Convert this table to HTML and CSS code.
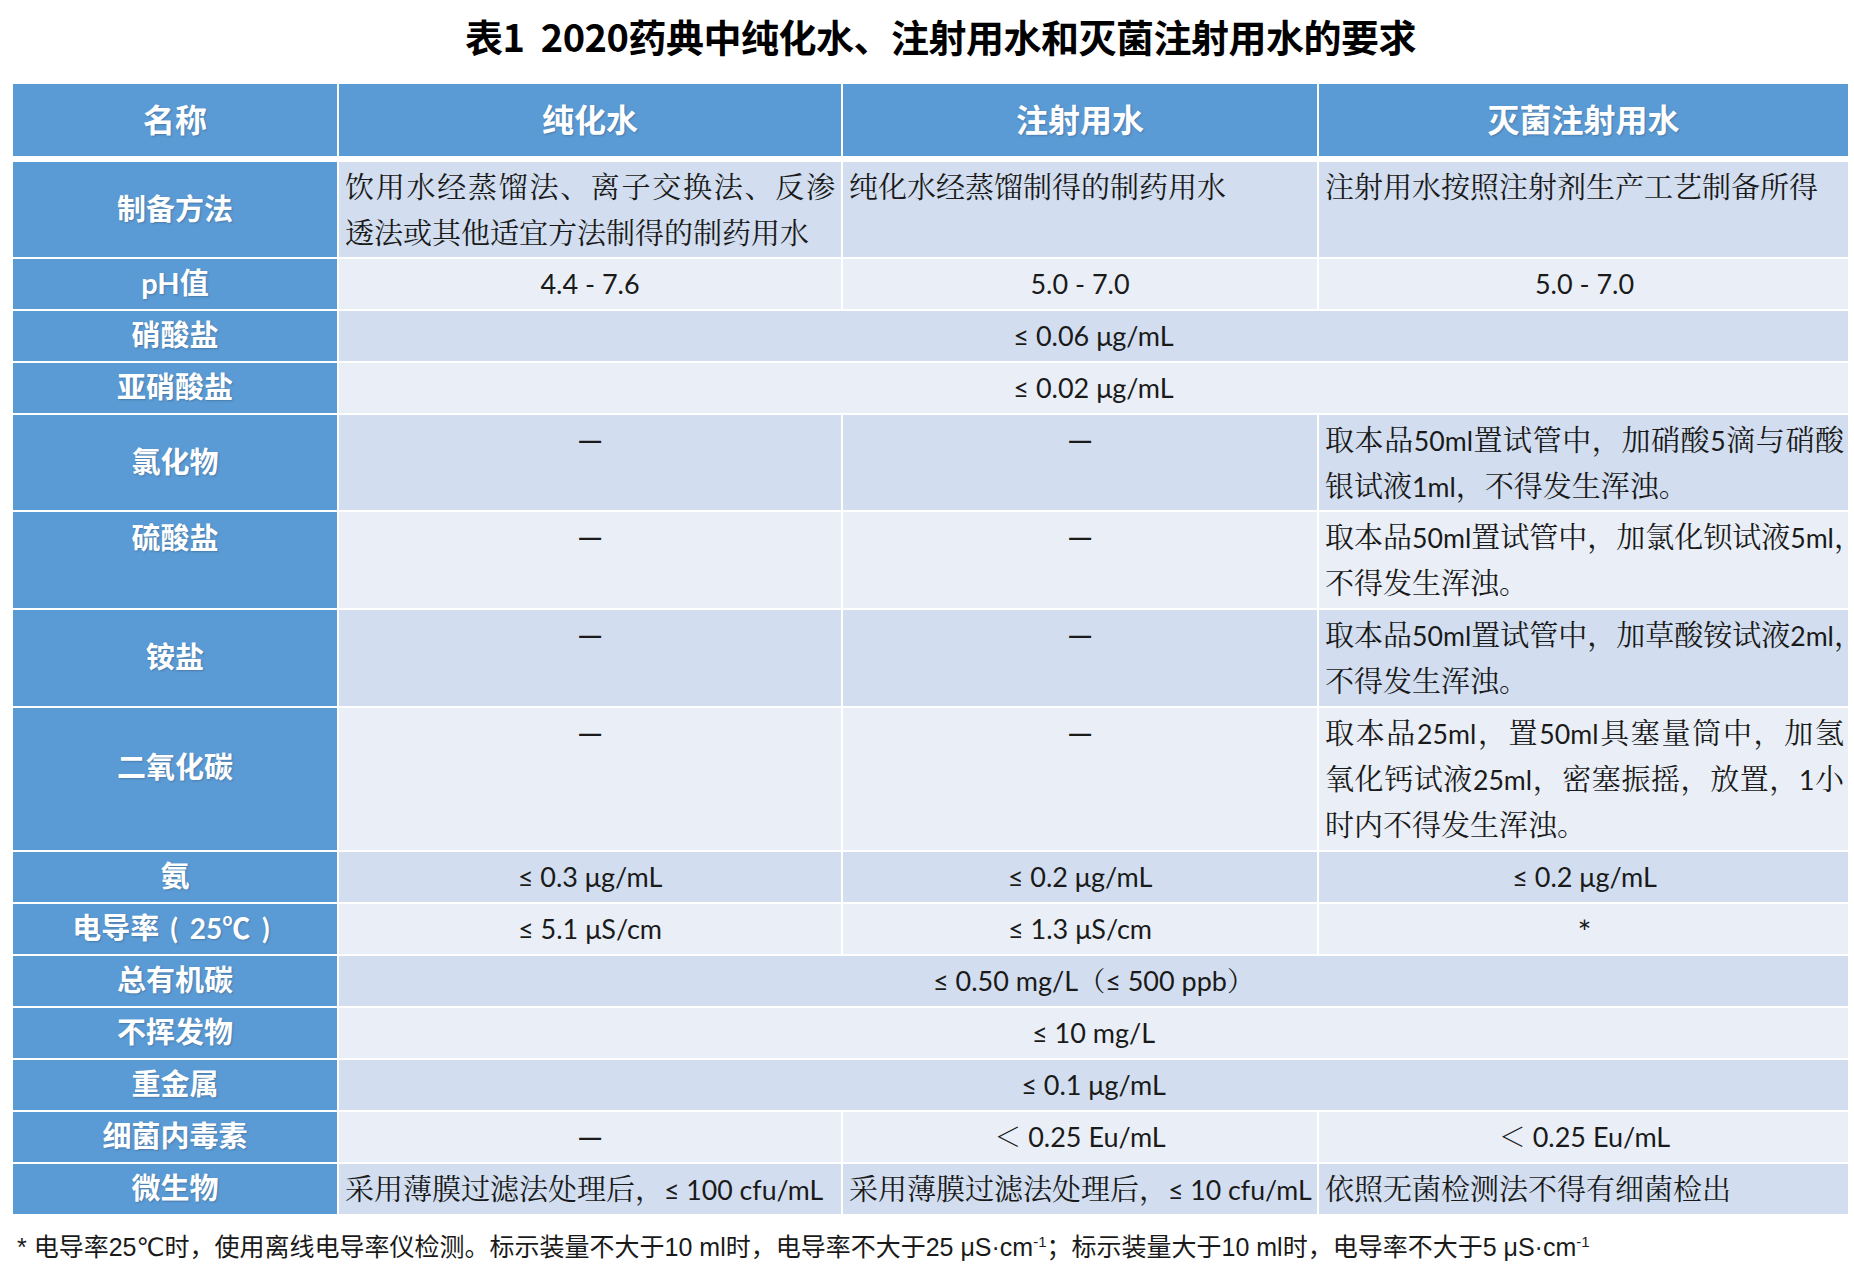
FILE: index.html
```html
<!DOCTYPE html>
<html lang="zh-CN">
<head>
<meta charset="utf-8">
<title>表1 2020药典中纯化水、注射用水和灭菌注射用水的要求</title>
<link rel="stylesheet" href="styles.css">
</head>
<body>
<main class="page">
  <h1 class="title">表1&nbsp;&nbsp;2020药典中纯化水、注射用水和灭菌注射用水的要求</h1>

  <div class="table">
    <div class="hd">名称</div>
    <div class="hd">纯化水</div>
    <div class="hd">注射用水</div>
    <div class="hd">灭菌注射用水</div>

    <div class="lab">制备方法</div>
    <div class="c a snug"><span class="ln j">饮用水经蒸馏法、离子交换法、反渗</span><span class="ln">透法或其他适宜方法制得的制药用水</span></div>
    <div class="c a">纯化水经蒸馏制得的制药用水</div>
    <div class="c a last">注射用水按照注射剂生产工艺制备所得</div>

    <div class="lab">pH值</div>
    <div class="c b ctr v">4.4 - 7.6</div>
    <div class="c b ctr v">5.0 - 7.0</div>
    <div class="c b ctr v last">5.0 - 7.0</div>

    <div class="lab">硝酸盐</div>
    <div class="c a ctr v span3">≤ 0.06 μg/mL</div>

    <div class="lab">亚硝酸盐</div>
    <div class="c b ctr v span3">≤ 0.02 μg/mL</div>

    <div class="lab">氯化物</div>
    <div class="c a ctr dash">—</div>
    <div class="c a ctr dash">—</div>
    <div class="c a last snug"><span class="ln j">取本品<span class="lat">50ml</span>置试管中，加硝酸<span class="lat">5</span>滴与硝酸</span><span class="ln">银试液<span class="lat">1ml</span>，不得发生浑浊。</span></div>

    <div class="lab top">硫酸盐</div>
    <div class="c b ctr dash">—</div>
    <div class="c b ctr dash">—</div>
    <div class="c b last"><span class="ln">取本品<span class="lat">50ml</span>置试管中，加氯化钡试液<span class="lat">5ml</span>，</span><span class="ln">不得发生浑浊。</span></div>

    <div class="lab">铵盐</div>
    <div class="c a ctr dash">—</div>
    <div class="c a ctr dash">—</div>
    <div class="c a last"><span class="ln">取本品<span class="lat">50ml</span>置试管中，加草酸铵试液<span class="lat">2ml</span>，</span><span class="ln">不得发生浑浊。</span></div>

    <div class="lab raise">二氧化碳</div>
    <div class="c b ctr dash">—</div>
    <div class="c b ctr dash">—</div>
    <div class="c b last"><span class="ln j">取本品<span class="lat">25ml</span>，置<span class="lat">50ml</span>具塞量筒中，加氢</span><span class="ln j">氧化钙试液<span class="lat">25ml</span>，密塞振摇，放置，<span class="lat">1</span>小</span><span class="ln">时内不得发生浑浊。</span></div>

    <div class="lab">氨</div>
    <div class="c a ctr v">≤ 0.3 μg/mL</div>
    <div class="c a ctr v">≤ 0.2 μg/mL</div>
    <div class="c a ctr v last">≤ 0.2 μg/mL</div>

    <div class="lab shift">电导率 <span class="lab-lat">( 25℃ )</span></div>
    <div class="c b ctr v">≤ 5.1 μS/cm</div>
    <div class="c b ctr v">≤ 1.3 μS/cm</div>
    <div class="c b ctr star last">*</div>

    <div class="lab">总有机碳</div>
    <div class="c a ctr v span3">≤ 0.50 mg/L（≤ 500 ppb）</div>

    <div class="lab">不挥发物</div>
    <div class="c b ctr v span3">≤ 10 mg/L</div>

    <div class="lab">重金属</div>
    <div class="c a ctr v span3">≤ 0.1 μg/mL</div>

    <div class="lab">细菌内毒素</div>
    <div class="c b ctr dash">—</div>
    <div class="c b ctr v">＜ 0.25 Eu/mL</div>
    <div class="c b ctr v last">＜ 0.25 Eu/mL</div>

    <div class="lab">微生物</div>
    <div class="c a">采用薄膜过滤法处理后，<span class="lat">≤ 100 cfu/mL</span></div>
    <div class="c a">采用薄膜过滤法处理后，<span class="lat">≤ 10 cfu/mL</span></div>
    <div class="c a last">依照无菌检测法不得有细菌检出</div>
  </div>

  <p class="note">* 电导率25℃时，使用离线电导率仪检测。标示装量不大于10 ml时，电导率不大于25 μS·cm<sup>-1</sup>；标示装量大于10 ml时，电导率不大于5 μS·cm<sup>-1</sup></p>
</main>
</body>
</html>
```

FILE: styles.css
```css
html, body {
  margin: 0;
  padding: 0;
  background: #ffffff;
  overflow: hidden;
}

.page {
  width: 1854px;
  padding: 0 0 0 13px;
  box-sizing: border-box;
}

.title {
  margin: 0 0 10px 0;
  padding-left: 14px;
  height: 74px;
  line-height: 72px;
  text-align: center;
  font-family: "Noto Sans CJK SC", sans-serif;
  font-weight: 700;
  font-size: 38px;
  color: #000000;
  letter-spacing: -0.5px;
}

.table {
  display: grid;
  grid-template-columns: 324px 502px 474px 529px;
  column-gap: 2px;
  row-gap: 2px;
  width: 1835px;
  background: #ffffff;
}

.hd {
  background: #5b9bd5;
  color: #ffffff;
  height: 72px;
  margin-bottom: 4px;
  padding-bottom: 4px;
  box-sizing: border-box;
  display: flex;
  align-items: center;
  justify-content: center;
  font-family: "Noto Sans CJK SC", sans-serif;
  font-weight: 700;
  font-size: 32px;
  text-shadow: 1px 1px 2px rgba(40, 60, 90, 0.35);
}

.lab {
  background: #5b9bd5;
  color: #ffffff;
  display: flex;
  align-items: center;
  justify-content: center;
  padding-bottom: 2px;
  font-family: Lato, "Noto Sans CJK SC", sans-serif;
  font-weight: 700;
  font-size: 29px;
  line-height: 40px;
  white-space: pre;
  text-shadow: 1px 1px 2px rgba(40, 60, 90, 0.35);
}

.lab.top {
  align-items: flex-start;
  padding-top: 6px;
  padding-bottom: 0;
}

.lab.raise {
  padding-bottom: 24px;
}

.lab.shift {
  padding-right: 8px;
}

.lab-lat {
  font-size: 28px;
  word-spacing: 5px;
  margin-left: 4px;
}

.c {
  padding: 2px 6px;
  line-height: 46px;
  font-family: Lato, "Noto Serif CJK SC", "Noto Sans CJK SC", sans-serif;
  font-weight: 400;
  font-size: 29px;
  color: #1a1a1a;
  white-space: nowrap;
}

.c.last {
  padding-right: 4px;
}

.c.a {
  background: #d2deef;
}

.c.b {
  background: #eaeff7;
}

.c.ctr {
  text-align: center;
}

.c.v {
  font-size: 27px;
}

.c.dash {
  font-size: 33px;
  line-height: 45px;
}

.c.star {
  font-size: 33px;
  line-height: 46px;
  padding-top: 4px;
  padding-bottom: 0;
}

.span3 {
  grid-column: span 3;
}

.ln {
  display: block;
  height: 46px;
  white-space: nowrap;
}

.c.snug .ln:last-child {
  height: 45px;
}

.ln.j {
  text-align: justify;
  text-align-last: justify;
}

.lat {
  font-size: 0.92em;
  line-height: 1;
}

.note {
  margin: 18px 0 0 4px;
  line-height: 30px;
  font-family: "Liberation Sans", "DejaVu Sans", "Noto Sans CJK SC", sans-serif;
  font-size: 25px;
  color: #1a1a1a;
  white-space: nowrap;
}

.note sup {
  font-size: 15px;
  line-height: 0;
  vertical-align: 9px;
}
```
